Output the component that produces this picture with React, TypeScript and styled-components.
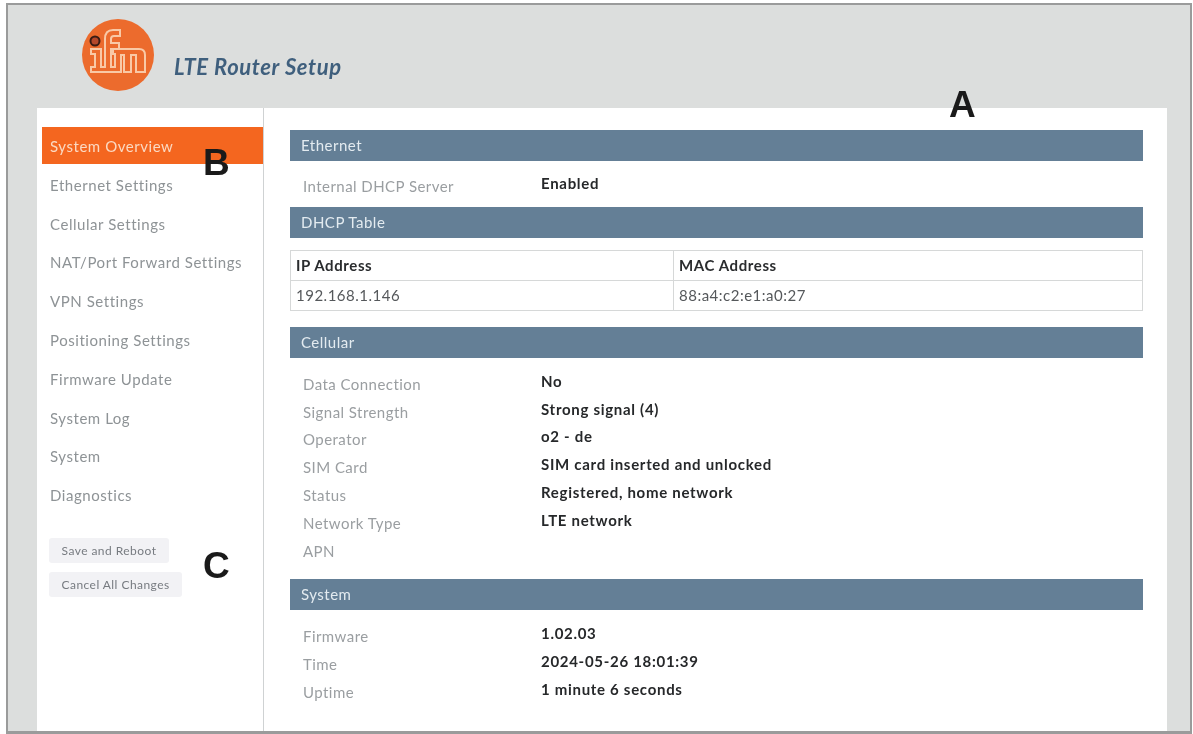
import styled, { createGlobalStyle } from 'styled-components'

const GlobalStyle = createGlobalStyle`
  html, body {
    margin: 0;
    padding: 0;
    background: #fff;
    font-family: Lato, 'Liberation Sans', sans-serif;
  }
`

const menu = [
  'System Overview',
  'Ethernet Settings',
  'Cellular Settings',
  'NAT/Port Forward Settings',
  'VPN Settings',
  'Positioning Settings',
  'Firmware Update',
  'System Log',
  'System',
  'Diagnostics',
]

const cellular = [
  ['Data Connection', 'No'],
  ['Signal Strength', 'Strong signal (4)'],
  ['Operator', 'o2 - de'],
  ['SIM Card', 'SIM card inserted and unlocked'],
  ['Status', 'Registered, home network'],
  ['Network Type', 'LTE network'],
  ['APN', ''],
]

const system = [
  ['Firmware', '1.02.03'],
  ['Time', '2024-05-26 18:01:39'],
  ['Uptime', '1 minute 6 seconds'],
]

function Logo() {
  return (
    <LogoMark viewBox='0 0 72 72' aria-label='ifm'>
      <circle cx='36' cy='36' r='36' fill='#ec6b2d' />
      <path
        d='M9 30H19V48H23V20Q23 11 31 11H38V17H32Q29 17 29 20V24H37V30H29V48H33V35H31V30H57Q63 30 63 36V53H54V36H49V53H42V36H39V53H9V48H13V35H9Z'
        fill='none'
        stroke='#f9c9a6'
        strokeWidth='2'
      />
      <circle cx='13' cy='22' r='4.5' fill='#b5482a' stroke='#3a1c14' strokeWidth='2' />
    </LogoMark>
  )
}

function Rows({ data, top, bottom }: { data: string[][]; top: number; bottom: number }) {
  return (
    <RowList $top={top} $bottom={bottom}>
      {data.map(([label, value]) => (
        <Row key={label}>
          <RowLabel>{label}</RowLabel>
          <RowValue>{value}</RowValue>
        </Row>
      ))}
    </RowList>
  )
}

function App() {
  return (
    <Frame>
      <GlobalStyle />
      <Header>
        <Logo />
        <Title>LTE Router Setup</Title>
      </Header>
      <Card>
        <Sidebar>
          {menu.map((item, i) => (
            <MenuItem key={item} $active={i === 0}>
              {item}
            </MenuItem>
          ))}
          <Buttons>
            <Button>Save and Reboot</Button>
            <Button>Cancel All Changes</Button>
          </Buttons>
        </Sidebar>
        <Main>
          <SectionHead>Ethernet</SectionHead>
          <Rows data={[['Internal DHCP Server', 'Enabled']]} top={11} bottom={7} />
          <SectionHead>DHCP Table</SectionHead>
          <Table>
            <thead>
              <tr>
                <Th>IP Address</Th>
                <Th>MAC Address</Th>
              </tr>
            </thead>
            <tbody>
              <tr>
                <Td>192.168.1.146</Td>
                <Td>88:a4:c2:e1:a0:27</Td>
              </tr>
            </tbody>
          </Table>
          <SectionHead>Cellular</SectionHead>
          <Rows data={cellular} top={12} bottom={15} />
          <SectionHead>System</SectionHead>
          <Rows data={system} top={12} bottom={0} />
        </Main>
      </Card>
      <Marker $x={941} $y={82}>A</Marker>
      <Marker $x={195} $y={140}>B</Marker>
      <Marker $x={195} $y={543}>C</Marker>
    </Frame>
  )
}

const Frame = styled.div`
  position: relative;
  box-sizing: border-box;
  width: 1186px;
  height: 731px;
  margin: 3px 0 0 6px;
  padding-right: 23px;
  border: 2px solid #9a9b9b;
  border-bottom-width: 3px;
  background: #dcdedd;
  filter: blur(0.45px);
`
const Header = styled.div`
  display: flex;
  align-items: flex-start;
  height: 103px;
  padding: 14px 0 0 74px;
  box-sizing: border-box;
`
const LogoMark = styled.svg`
  width: 72px;
  height: 72px;
  flex: none;
`
const Title = styled.div`
  margin: 34px 0 0 20px;
  font-size: 22px;
  font-weight: 700;
  font-style: italic;
  letter-spacing: 0.6px;
  color: #3f5f7d;
`
const Card = styled.div`
  display: flex;
  height: 623px;
  margin-left: 29px;
  background: #fff;
`
const Sidebar = styled.div`
  flex: none;
  width: 227px;
  box-sizing: border-box;
  padding: 19px 0 0 5px;
  border-right: 1px solid #cfd2d3;
`
const MenuItem = styled.div<{ $active?: boolean }>`
  height: ${({ $active }) => ($active ? '37px' : '38.8px')};
  margin-bottom: ${({ $active }) => ($active ? '1.8px' : '0')};
  line-height: 38px;
  padding-left: 8px;
  font-size: 15px;
  letter-spacing: 0.55px;
  white-space: nowrap;
  color: ${({ $active }) => ($active ? '#fbd9c2' : '#8e9396')};
  background: ${({ $active }) => ($active ? '#f4661f' : 'transparent')};
`
const Buttons = styled.div`
  display: flex;
  flex-flow: column;
  align-items: flex-start;
  gap: 9px;
  margin: 23px 0 0 7px;
`
const Button = styled.button`
  height: 25px;
  padding: 0 12.5px;
  border: 0;
  border-radius: 3px;
  background: #f2f2f5;
  font-family: inherit;
  font-size: 12px;
  letter-spacing: 0.45px;
  color: #777b80;
`
const Main = styled.div`
  flex: 1;
  padding: 22px 24px 0 26px;
`
const SectionHead = styled.div`
  height: 31px;
  line-height: 31px;
  padding-left: 11px;
  font-size: 15px;
  letter-spacing: 0.5px;
  color: #e3ebf0;
  background: #647f96;
`
const RowList = styled.div<{ $top: number; $bottom: number }>`
  padding: ${({ $top }) => $top}px 0 ${({ $bottom }) => $bottom}px 13px;
`
const Row = styled.div`
  display: grid;
  grid-template-columns: 238px 1fr;
  height: 27.8px;
`
const RowLabel = styled.div`
  padding-top: 5px;
  font-size: 15px;
  letter-spacing: 0.45px;
  color: #9a9ea1;
`
const RowValue = styled.div`
  padding-top: 2px;
  font-size: 15px;
  font-weight: 700;
  letter-spacing: 0.7px;
  color: #26282a;
`
const Table = styled.table`
  width: 100%;
  margin: 12px 0 16px;
  border-collapse: collapse;
  table-layout: fixed;
`
const Th = styled.th`
  height: 29px;
  padding: 0 0 0 5px;
  border: 1px solid #d6d8d8;
  text-align: left;
  font-size: 15px;
  font-weight: 700;
  letter-spacing: 0.6px;
  color: #2a2c2e;
  &:first-child {
    width: 377px;
  }
`
const Td = styled.td`
  height: 29px;
  padding: 0 0 0 5px;
  border: 1px solid #d6d8d8;
  font-size: 15px;
  letter-spacing: 0.5px;
  color: #55585b;
`
const Marker = styled.div<{ $x: number; $y: number }>`
  position: absolute;
  left: ${({ $x }) => $x}px;
  top: ${({ $y }) => $y}px;
  font-family: 'Liberation Sans', sans-serif;
  font-size: 37px;
  font-weight: 700;
  line-height: 36px;
  color: #1a1a1a;
`
export default App
